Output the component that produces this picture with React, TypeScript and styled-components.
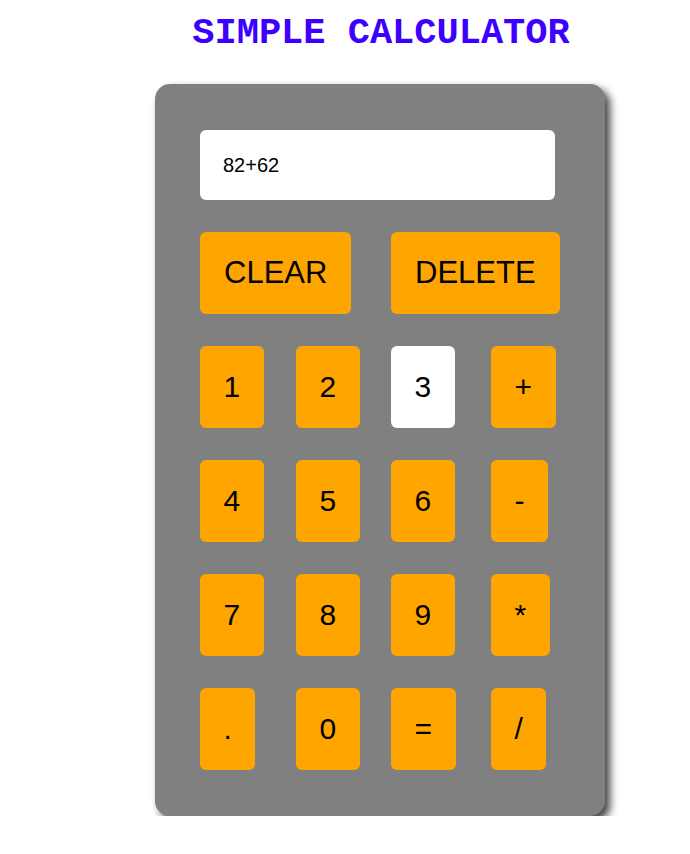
import React from "react";
import styled, { createGlobalStyle } from "styled-components";

const GlobalStyle = createGlobalStyle`
  body {
    margin: 0;
    background: #fff;
    font-family: "Liberation Sans", Arial, sans-serif;
  }
`;

const Page = styled.div`
  padding: 12px 0 0 155px;
`;

const Title = styled.h1`
  width: 452px;
  height: 42px;
  margin: 0;
  text-align: center;
  line-height: 42px;
  font-family: "Liberation Mono", "Courier New", monospace;
  font-size: 37px;
  font-weight: bold;
  color: #3d00ff;
`;

const Calculator = styled.div`
  box-sizing: border-box;
  width: 450px;
  margin-top: 30px;
  padding: 46px 45px;
  background: #808080;
  border-radius: 15px;
  box-shadow: 5px 5px 9px rgba(0, 0, 0, 0.75);
`;

const Display = styled.div`
  box-sizing: border-box;
  width: 355px;
  height: 70px;
  margin-bottom: 32px;
  padding: 0 23px;
  display: flex;
  align-items: center;
  background: #fff;
  border-radius: 6px;
  font-size: 20px;
  color: #000;
`;

const Keys = styled.div`
  display: grid;
  grid-template-columns: 65px 64px 69px auto;
  column-gap: 31px;
  row-gap: 32px;
  justify-items: start;
`;

const Key = styled.button<{ $active?: boolean; $wide?: boolean }>`
  border: none;
  border-radius: 6px;
  padding: ${(p) => (p.$wide ? "24px" : "24px 23.5px")};
  line-height: 34px;
  font-family: "Liberation Sans", Arial, sans-serif;
  font-size: ${(p) => (p.$wide ? "31px" : "30px")};
  color: #000;
  background: ${(p) => (p.$active ? "#fff" : "#ffa500")};
  grid-column: ${(p) => (p.$wide ? "span 2" : "auto")};
  cursor: pointer;
`;

const keys = ["1", "2", "3", "+", "4", "5", "6", "-", "7", "8", "9", "*", ".", "0", "=", "/"];

export default function App() {
  return (
    <>
      <GlobalStyle />
      <Page>
        <Title>SIMPLE CALCULATOR</Title>
        <Calculator>
          <Display>82+62</Display>
          <Keys>
            <Key $wide>CLEAR</Key>
            <Key $wide>DELETE</Key>
            {keys.map((k) => (
              <Key key={k} $active={k === "3"}>
                {k}
              </Key>
            ))}
          </Keys>
        </Calculator>
      </Page>
    </>
  );
}
